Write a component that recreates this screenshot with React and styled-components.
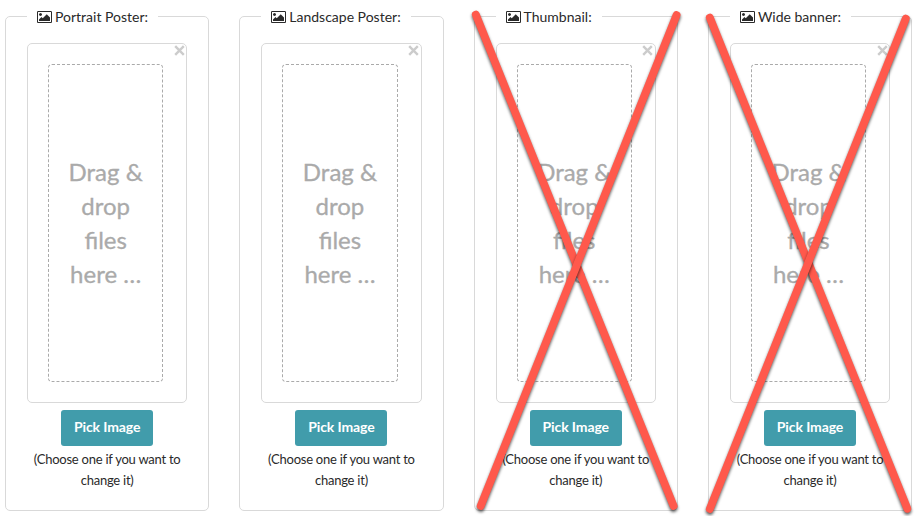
import React from "react";
import styled, { createGlobalStyle } from "styled-components";

const GlobalStyle = createGlobalStyle`
  *, *::before, *::after { box-sizing: border-box; }
  html, body { height: 100%; overflow: hidden; }
  body {
    margin: 0;
    background: #fff;
    color: #2a2a2a;
    font-family: Lato, sans-serif;
  }
`;

const Row = styled.main`
  display: grid;
  grid-template-columns: repeat(4, 204.3px);
  column-gap: 30px;
  height: 516px;
  overflow: hidden;
  padding: 6px 0 0 5px;
`;

const Panel = styled.fieldset`
  position: relative;
  min-width: 0;
  height: 505px;
  margin: 0;
  padding: 16px 21px 0;
  border: 1px solid #d9d9d9;
  border-radius: 5px;
  display: flex;
  flex-direction: column;
  align-items: center;
`;

const Legend = styled.legend`
  display: flex;
  align-items: center;
  height: 21px;
  padding: 0 10px;
  font-size: 14px;
  line-height: 22px;
  white-space: nowrap;
`;

const LegendIcon = styled.svg`
  width: 15px;
  height: 12px;
  margin-right: 3px;
  fill: currentColor;
`;

const Preview = styled.div`
  position: relative;
  width: 160.3px;
  height: 360px;
  padding: 20px 0 0 20px;
  border: 1px solid #d9d9d9;
  border-radius: 5px;
`;

const Close = styled.button`
  position: absolute;
  top: 1.4px;
  right: 1.7px;
  width: 11px;
  height: 11px;
  padding: 0;
  border: 0;
  background: none;
  display: flex;
`;

const DropZone = styled.div`
  display: flex;
  align-items: center;
  justify-content: center;
  width: 115.3px;
  height: 318px;
  padding: 0 16px 1px;
  border: 1px dashed #aaa;
  border-radius: 4px;
  color: #aaa;
  font-size: 24px;
  line-height: 34px;
  text-align: center;
  -webkit-text-stroke: 0.3px #aaa;
`;

const PickButton = styled.button`
  width: 92px;
  height: 36px;
  margin-top: 7px;
  padding: 0 0 2px;
  border: 0;
  border-radius: 3px;
  background: #419cab;
  color: #fff;
  font: 700 14px/20px Lato, sans-serif;
  letter-spacing: -0.1px;
  white-space: nowrap;
`;

const Hint = styled.p`
  width: 156px;
  margin: 3px 0 0;
  font-size: 13px;
  line-height: 21px;
  letter-spacing: -0.24px;
  text-align: center;
`;

const Cross = styled.svg`
  position: absolute;
  top: -32px;
  left: -10px;
  width: 224px;
  height: 530px;
  overflow: visible;
  pointer-events: none;

  line {
    stroke: #ff594c;
    stroke-width: 7.8;
    stroke-linecap: round;
    filter: drop-shadow(0 2px 1.5px rgba(0, 0, 0, 0.65));
  }
`;

const panels = [
  { title: "Portrait Poster:" },
  { title: "Landscape Poster:" },
  { title: "Thumbnail:", strokes: [[10.8, 19.5, 208.6, 511], [211.6, 20, 15.7, 511]] },
  { title: "Wide banner:", strokes: [[10.8, 22.5, 208.4, 513.8], [206.8, 23.5, 10.8, 514]] },
];

function PictureIcon() {
  return (
    <LegendIcon viewBox="0 128 1920 1536" aria-hidden="true">
      <path d="M640 576q0 80-56 136t-136 56-136-56-56-136 56-136 136-56 136 56 56 136zm1024 384v448h-1408v-192l320-320 160 160 512-512zm96-704h-1600q-13 0-22.5 9.5t-9.5 22.5v1216q0 13 9.5 22.5t22.5 9.5h1600q13 0 22.5-9.5t9.5-22.5v-1216q0-13-9.5-22.5t-22.5-9.5zm160 32v1216q0 66-47 113t-113 47h-1600q-66 0-113-47t-47-113v-1216q0-66 47-113t113-47h1600q66 0 113 47t47 113z" />
    </LegendIcon>
  );
}

function ImagePanel({ title, strokes }) {
  return (
    <Panel>
      <Legend>
        <PictureIcon />
        {title}
      </Legend>
      <Preview>
        <Close type="button" aria-label="Close">
          <svg width="11" height="11" viewBox="0 0 11 11">
            <path d="M1.2 1.2 9.8 9.8M9.8 1.2 1.2 9.8" stroke="#ccc" strokeWidth="2.4" />
          </svg>
        </Close>
        <DropZone>Drag &amp; drop files here …</DropZone>
      </Preview>
      <PickButton type="button">Pick Image</PickButton>
      <Hint>(Choose one if you want to change it)</Hint>
      {strokes && (
        <Cross aria-hidden="true">
          {strokes.map(([x1, y1, x2, y2]) => (
            <line key={x1} x1={x1} y1={y1} x2={x2} y2={y2} />
          ))}
        </Cross>
      )}
    </Panel>
  );
}

export default function App() {
  return (
    <>
      <GlobalStyle />
      <Row>
        {panels.map((panel) => (
          <ImagePanel key={panel.title} {...panel} />
        ))}
      </Row>
    </>
  );
}
